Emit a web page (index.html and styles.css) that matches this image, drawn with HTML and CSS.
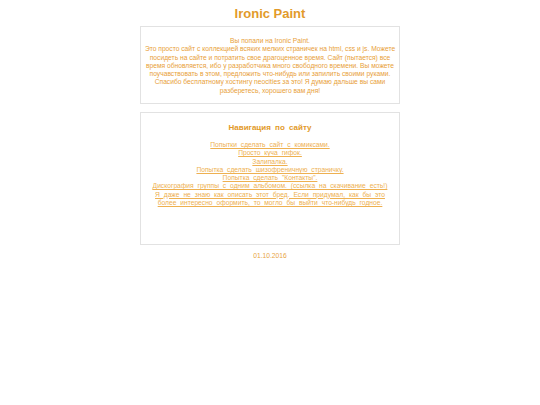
FILE: index.html
```html
<!DOCTYPE html>
<html lang="ru">
<head>
<meta charset="utf-8">
<title>Ironic Paint</title>
<link rel="stylesheet" href="styles.css">
</head>
<body>
<h1 class="title">Ironic Paint</h1>
<div class="box intro">
<p>Вы попали на Ironic Paint.<br>Это просто сайт с коллекцией всяких мелких страничек на html, css и js. Можете посидеть на сайте и потратить свое драгоценное время. Сайт (пытается) все время обновляется, ибо у разработчика много свободного времени. Вы можете поучавствовать в этом, предложить что-нибудь или запилить своими руками. Спасибо бесплатному хостингу neocities за это! Я думаю дальше вы сами разберетесь, хорошего вам дня!</p>
</div>
<div class="box nav">
<h2 class="nav-title">Навигация по сайту</h2>
<ul class="links">
<li><a href="#">Попытки сделать сайт с комиксами.</a></li>
<li><a href="#">Просто куча гифок.</a></li>
<li><a href="#">Залипалка.</a></li>
<li><a href="#">Попытка сделать шизофреничную страничку.</a></li>
<li><a href="#">Попытка сделать "Контакты".</a></li>
<li><a href="#">Дискография группы с одним альбомом. (ссылка на скачивание есть!)</a></li>
<li><a href="#">Я даже не знаю как описать этот бред. Если придумал, как бы это более интересно оформить, то могло бы выйти что-нибудь годное.</a></li>
</ul>
</div>
<p class="date">01.10.2016</p>
</body>
</html>
```
FILE: styles.css
```css
html, body {
  margin: 0;
  padding: 0;
  background: #fff;
}
body {
  font-family: "Liberation Sans", Arial, sans-serif;
  color: #e8a038;
  display: flex;
  flex-direction: column;
  align-items: center;
}
.title {
  margin: 6px 0 0;
  font-size: 13px;
  line-height: 16px;
  font-weight: bold;
  color: #e29a2a;
}
.box {
  box-sizing: border-box;
  width: 260px;
  border: 1px solid #e2e2e2;
  text-align: center;
}
.intro {
  margin-top: 4px;
  height: 78px;
  padding: 10px 3px 0;
}
.intro p {
  margin: 0;
  font-size: 6.7px;
  line-height: 8.3px;
}
.nav {
  margin-top: 8px;
  height: 133px;
  padding: 10px 3px 0;
}
.nav-title {
  margin: 0 0 8px;
  font-size: 8px;
  line-height: 10px;
  font-weight: bold;
  word-spacing: 2px;
  color: #e29a2a;
}
.links {
  list-style: none;
  margin: 0;
  padding: 0;
  font-size: 6.7px;
  line-height: 8.3px;
  word-spacing: 2px;
}
.links a {
  color: #eeb050;
}
.date {
  margin: 6px 0 0;
  font-size: 6.7px;
  line-height: 9px;
  color: #e8a444;
}
```
